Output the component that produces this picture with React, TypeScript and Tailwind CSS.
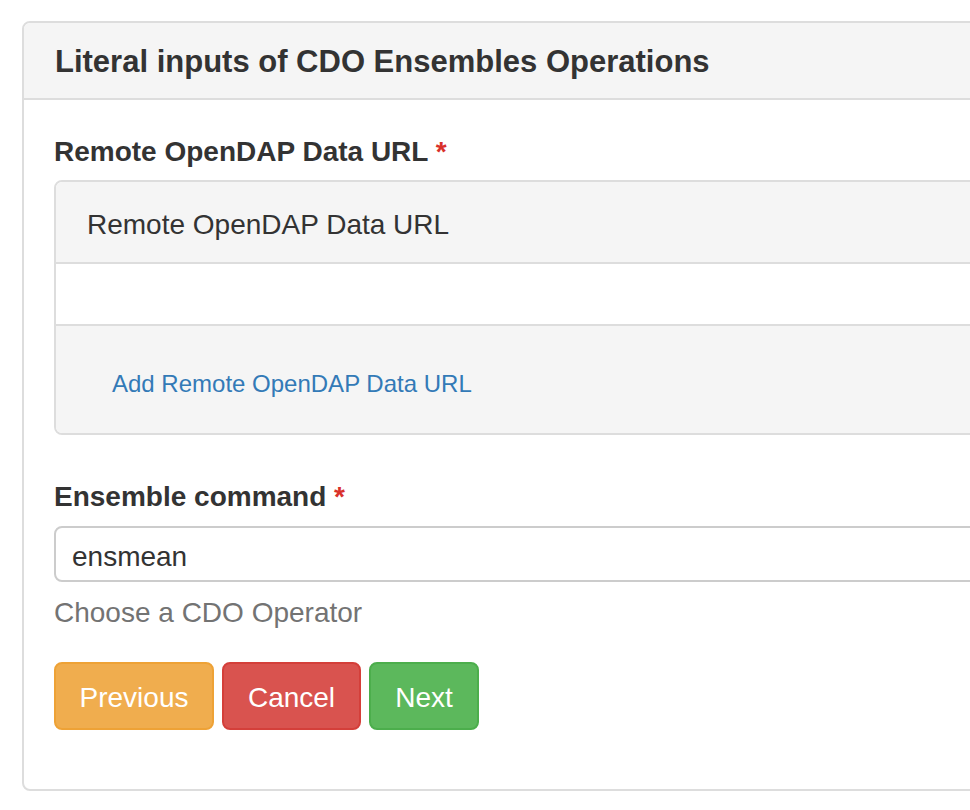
export default function App() {
  return (
    <div
      className="w-[970px] h-[810px] overflow-hidden bg-white text-[#333]"
      style={{ fontFamily: '"Liberation Sans", Arial, sans-serif' }}
    >
      <div className="pt-[21px] pl-[22px]">
        <div className="w-[1000px] h-[770px] border-2 border-[#ddd] rounded-[8px] flex flex-col">
          <div className="h-[77px] shrink-0 bg-[#f5f5f5] border-b-2 border-[#ddd] rounded-t-[6px] pl-[31px] pt-[4px] flex items-center text-[31px] font-semibold text-[#333]">
            Literal inputs of CDO Ensembles Operations
          </div>

          <div className="pl-[30px] pt-[32px]">
            <div className="text-[28px] font-bold leading-[40px]">
              Remote OpenDAP Data URL <span className="text-[#d9312b]">*</span>
            </div>

            <div className="mt-[8px] border-2 border-[#ddd] rounded-[8px] overflow-hidden">
              <div className="h-[82px] bg-[#f5f5f5] border-b-2 border-[#ddd] pl-[31px] pt-[5px] flex items-center text-[28px]">
                Remote OpenDAP Data URL
              </div>
              <div className="h-[62px] bg-white border-b-2 border-[#ddd]" />
              <div className="h-[107px] bg-[#f5f5f5] pl-[56px] pt-[8px] flex items-center">
                <a href="#" className="text-[24px] text-[#337ab7]">
                  Add Remote OpenDAP Data URL
                </a>
              </div>
            </div>

            <div className="mt-[42px] text-[28px] font-bold leading-[40px]">
              Ensemble command <span className="text-[#d9312b]">*</span>
            </div>
            <div className="mt-[9px] h-[56px] border-2 border-[#ccc] rounded-[8px] pl-[16px] pt-[6px] flex items-center text-[28px] text-[#333]">
              ensmean
            </div>
            <div className="mt-[11px] text-[28px] leading-[40px] text-[#737373]">
              Choose a CDO Operator
            </div>

            <div className="mt-[29px] flex gap-[8px]">
              <button className="h-[68px] w-[160px] pt-[3px] rounded-[8px] border-2 border-[#eea236] bg-[#f0ad4e] text-white text-[28px]">
                Previous
              </button>
              <button className="h-[68px] w-[139px] pt-[3px] rounded-[8px] border-2 border-[#d43f3a] bg-[#d9534f] text-white text-[28px]">
                Cancel
              </button>
              <button className="h-[68px] w-[110px] pt-[3px] rounded-[8px] border-2 border-[#4cae4c] bg-[#5cb85c] text-white text-[28px]">
                Next
              </button>
            </div>
          </div>
        </div>
      </div>
    </div>
  );
}
